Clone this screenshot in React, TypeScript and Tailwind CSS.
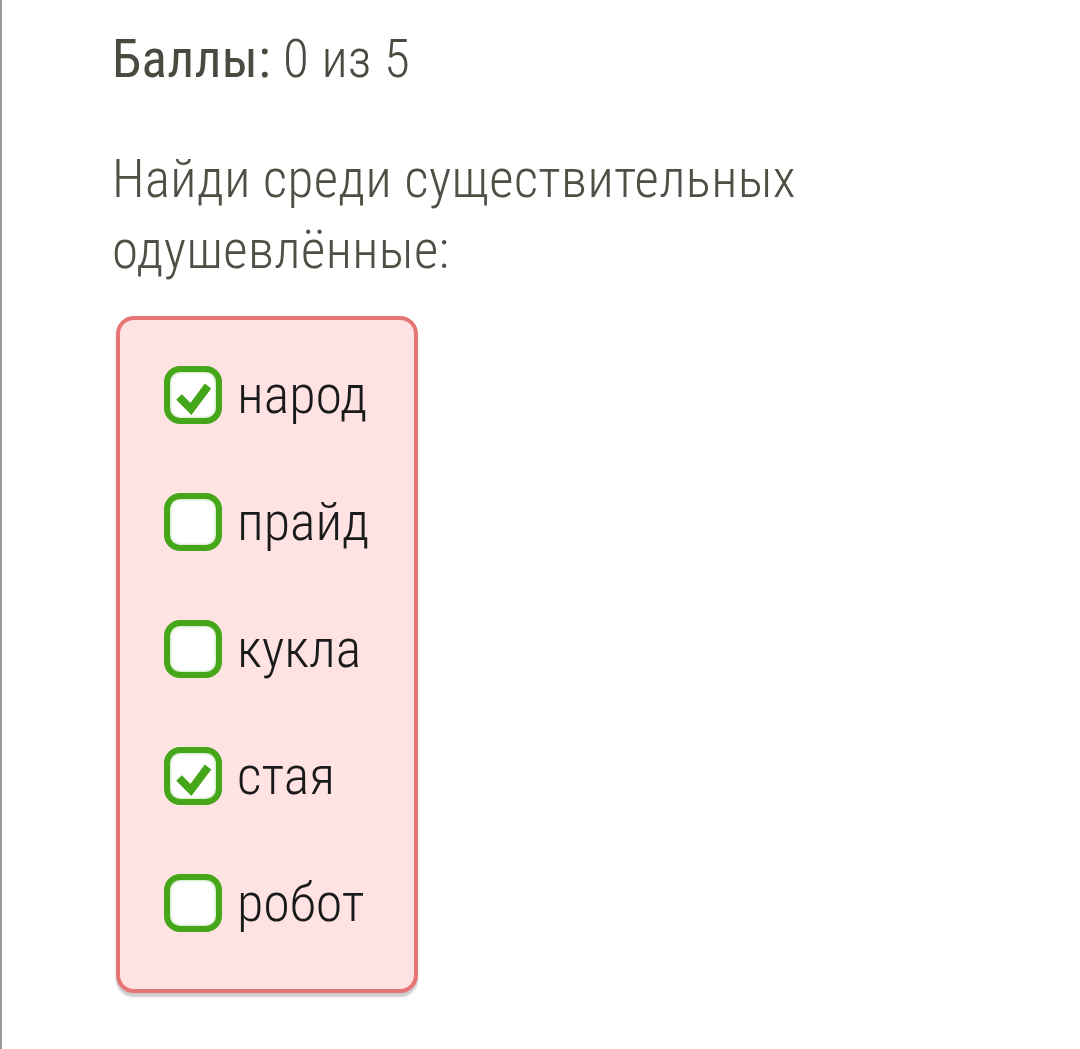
import React from "react";

const items = [
  { label: "народ", checked: true },
  { label: "прайд", checked: false },
  { label: "кукла", checked: false },
  { label: "стая", checked: true },
  { label: "робот", checked: false },
];

function Box({ checked }: { checked: boolean }) {
  return (
    <div className="flex h-[58px] w-[58px] shrink-0 items-center justify-center rounded-[16px] border-[6px] border-[#45a619] bg-white shadow-[inset_0_0_3px_rgba(69,166,25,0.55)]">
      {checked && (
        <svg width="46" height="46" viewBox="0 0 46 46">
          <path d="M9 25 L21 37 L38 14" fill="none" stroke="#45a619" strokeWidth="8" strokeLinecap="butt" strokeLinejoin="miter" />
        </svg>
      )}
    </div>
  );
}

export default function App() {
  return (
    <div
      className="min-h-[1049px] w-full border-l-2 border-[#9a9a9a] bg-white pl-[110px] pt-[27px]"
      style={{ fontFamily: "Roboto, 'Liberation Sans', sans-serif", fontStretch: "condensed" }}
    >
      <div className="text-[53px] leading-[64px] tracking-[0.3px] text-[#4a4a40]">
        <span className="font-normal">Баллы:</span>
        <span className="font-light"> 0 из 5</span>
      </div>
      <div className="mt-[53px] text-[53px] font-light leading-[71px] tracking-[0.4px] text-[#4f4f45]">
        Найди среди существительных
        <br />
        одушевлённые:
      </div>
      <div className="ml-[4px] mt-[30px] w-[302px] rounded-[18px] border-4 border-[#e67575] bg-[#ffe3e3] pb-[57px] pl-[44px] pt-[46px] shadow-[0_4px_2px_rgba(0,0,0,0.2)]">
        <div className="flex flex-col gap-[69px]">
          {items.map((it) => (
            <div key={it.label} className="flex items-center gap-[15px]">
              <Box checked={it.checked} />
              <span className="text-[54px] font-light leading-[54px] text-[#1a1a1a]">{it.label}</span>
            </div>
          ))}
        </div>
      </div>
    </div>
  );
}
